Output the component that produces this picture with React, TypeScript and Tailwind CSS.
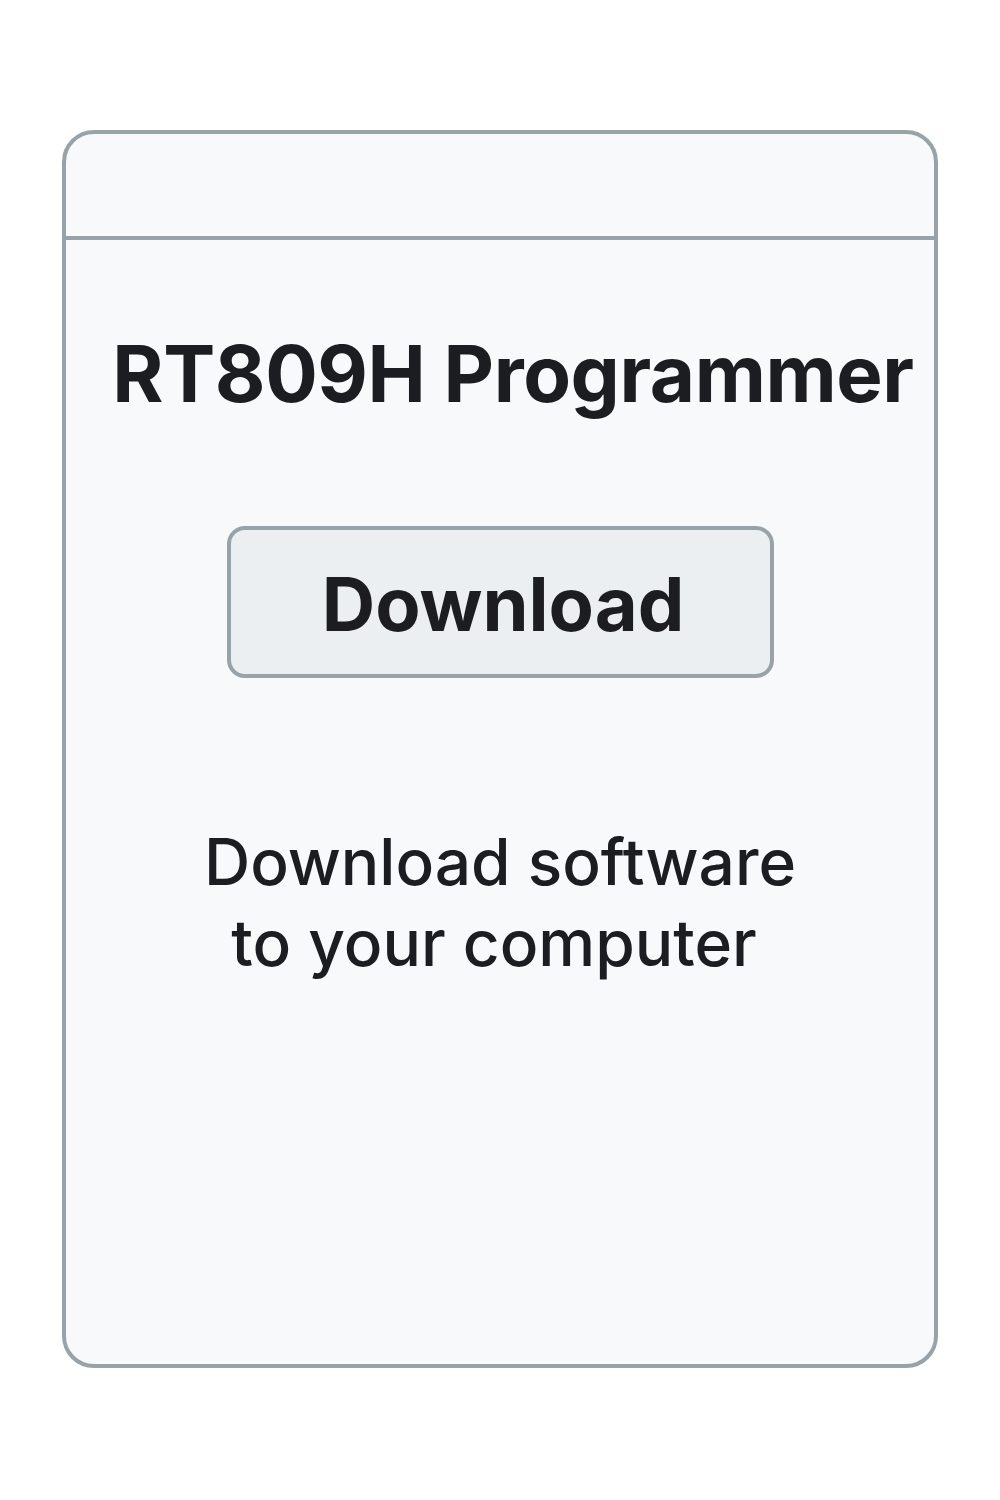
export default function App() {
  return (
    <div className="min-h-[1500px] w-[1000px] bg-white pt-[130px]" style={{ fontFamily: "Inter, 'Noto Sans', sans-serif" }}>
      <div className="mx-[62px] flex h-[1238px] flex-col rounded-[32px] border-4 border-[#98a3a9] bg-[#f8f9fb]">
        <div className="h-[106px] shrink-0 border-b-4 border-[#98a3a9]" />
        <h1 className="mt-[95px] whitespace-nowrap pl-[26px] text-center text-[78px] font-bold leading-none tracking-[-0.4px] text-[#1b1d21]">
          RT809H Programmer
        </h1>
        <div className="mt-[113px] flex justify-center">
          <button className="flex h-[152px] w-[547px] items-center justify-center rounded-[18px] border-4 border-[#98a3a9] bg-[#eceff1] pl-[6px] pt-[4px] text-[74px] font-bold text-[#1b1d21]">
            Download
          </button>
        </div>
        <p className="mt-[143px] text-center text-[64px] font-medium leading-[81px] text-[#1b1d21]">
          Download software
          <br />
          <span className="pr-[12px]">to your computer</span>
        </p>
      </div>
    </div>
  );
}
